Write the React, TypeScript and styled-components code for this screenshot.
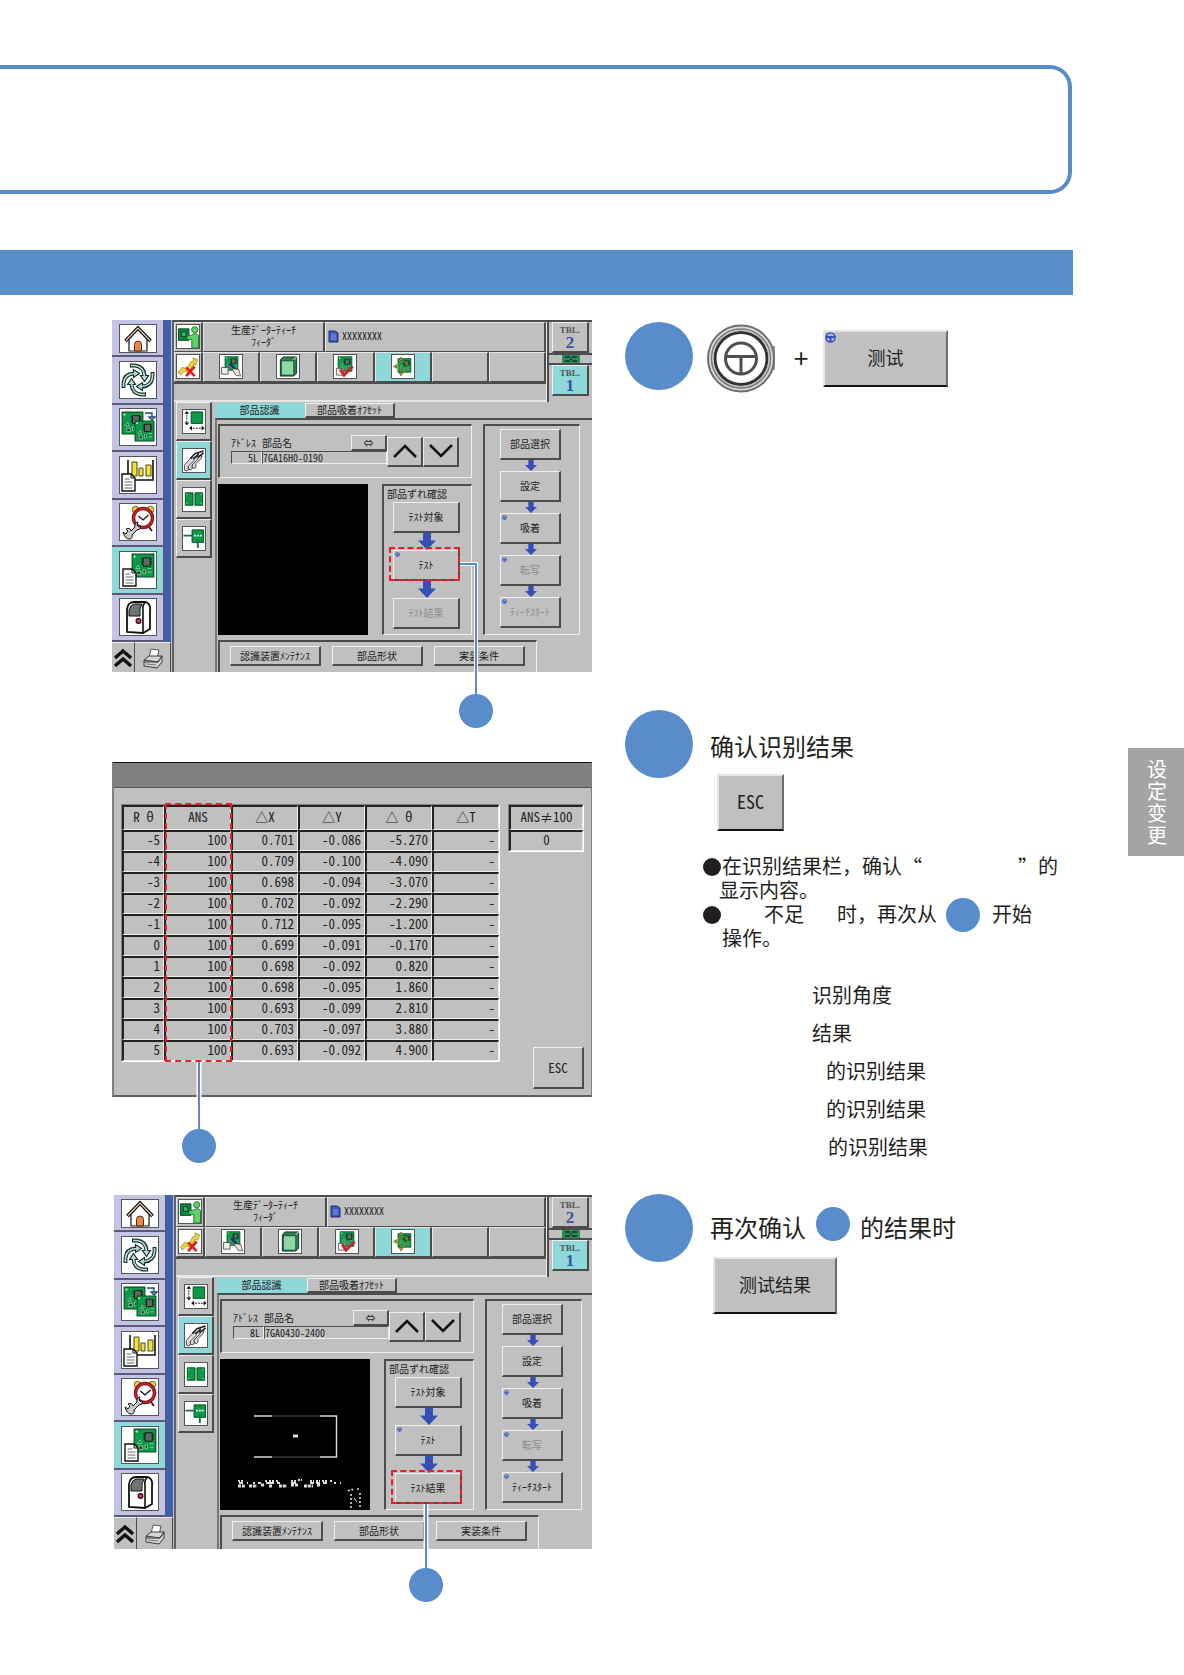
import React from "react";
import styled, { createGlobalStyle, css } from "styled-components";

const BLUE = "#588ccb";
const GREY = "#c0c0c0";
const CYAN = "#8fd8da";
const LILAC = "#c3c3e6";
const SHADOW = "#4c4c4c";
const ARROW = "#3450b4";
const GREEN = "#0c9a48";
const INK = "#231f20";

const Global = createGlobalStyle`
  *, *::before, *::after { box-sizing: border-box; }
  body { margin: 0; background: #fff; color: ${INK}; font-family: "Noto Sans CJK SC", sans-serif; }
  button, input { font: inherit; color: inherit; margin: 0; padding: 0; border-radius: 0; }
  h2, p, dl, dd, figure { margin: 0; font-weight: 400; }
  svg { display: block; }
`;

/* ---------- page ---------- */

const Page = styled.main`
  padding: 65px 0 88px;
`;
const Summary = styled.header`
  height: 129px;
  margin-right: 112px;
  border: 4px solid ${BLUE};
  border-left: 0;
  border-radius: 0 22px 22px 0;
`;
const Band = styled.div`
  height: 45px;
  margin: 56px 111px 25px 0;
  background: ${BLUE};
`;
const Step = styled.section`
  display: grid;
  grid-template-columns: 480px minmax(0, 1fr) 56px;
  padding-left: 112px;
`;
const Figure = styled.figure<{ $top?: number; $left?: number; $bottom?: number }>`
  position: relative;
  align-self: start;
  margin: ${(p) => `${p.$top ?? 0}px 0 ${p.$bottom ?? 0}px ${p.$left ?? 0}px`};
`;
const Text = styled.div<{ $top?: number }>`
  display: grid;
  grid-template-columns: 68px minmax(0, 1fr);
  align-content: start;
  padding: ${(p) => p.$top ?? 0}px 0 0 33px;
`;
const Dot = styled.span<{ $size: number }>`
  flex: none;
  width: ${(p) => p.$size}px;
  height: ${(p) => p.$size}px;
  border-radius: 50%;
  background: ${BLUE};
`;
const Body = styled.div<{ $top: number }>`
  padding: ${(p) => p.$top}px 0 0 17px;
`;
const Combo = styled.div`
  display: flex;
  align-items: center;
  height: 72px;
  padding-left: 14px;
`;
const Plus = styled.span`
  width: 48px;
  padding-left: 4px;
  font: 26px/26px "Liberation Sans", sans-serif;
  text-align: center;
`;
const Heading = styled.h2`
  display: flex;
  align-items: center;
  height: 34px;
  font-size: 24px;
  line-height: 34px;
`;
const HeadDot = styled(Dot)`
  margin: 0 10px 6px;
`;
const BigKey = styled.button<{ $w: number }>`
  position: relative;
  width: ${(p) => p.$w}px;
  height: 57px;
  padding-bottom: 3px;
  background: ${GREY};
  border: solid;
  border-width: 2px;
  border-color: #e6e6e6 #6e6e6e #111 #e6e6e6;
  color: #222;
  font: 18px/24px "Noto Sans Mono CJK SC", "Noto Sans CJK SC", sans-serif;
`;
const KeyMark = styled.span`
  position: absolute;
  left: 0;
  top: 0;
`;
const KeyRow = styled.div<{ $top: number; $left: number }>`
  padding: ${(p) => p.$top}px 0 0 ${(p) => p.$left}px;
`;
const Notes = styled.div`
  grid-column: 1 / -1;
  padding: 24px 0 0 78px;
  font: 20px/24px "Liberation Sans", "Noto Sans CJK SC", sans-serif;
`;
const Line = styled.p<{ $indent?: number }>`
  display: flex;
  align-items: center;
  height: 24px;
  padding-left: ${(p) => p.$indent ?? 0}px;
  white-space: pre;
`;
const Quote = styled.span`
  font-family: "Noto Sans CJK SC", sans-serif;
`;
const Bullet = styled.span`
  flex: none;
  width: 18px;
  height: 18px;
  margin-right: 1px;
  border-radius: 50%;
  background: ${INK};
`;
const Gap = styled.span<{ $w: number }>`
  flex: none;
  width: ${(p) => p.$w}px;
`;
const NoteDot = styled(Dot)`
  margin: 0 12px 0 9px;
`;
const Terms = styled.dl`
  grid-column: 1 / -1;
  display: grid;
  gap: 8px;
  padding: 29px 0 0 187px;
  font-size: 20px;
  line-height: 30px;
`;
const Term = styled.dd<{ $in?: number }>`
  padding-left: ${(p) => p.$in ?? 0}px;
`;
const SideTab = styled.aside`
  align-self: start;
  width: 56px;
  height: 108px;
  margin-top: 38px;
  padding: 10px 17px 0 19px;
  background: #a4a4a4;
  color: #fff;
  font-size: 20px;
  line-height: 22px;
  word-break: break-all;
`;

/* ---------- call-outs over the figures ---------- */

const Frame = styled.div<{ $x: number; $y: number; $w: number; $h: number }>`
  position: absolute;
  left: ${(p) => p.$x}px;
  top: ${(p) => p.$y}px;
  width: ${(p) => p.$w}px;
  height: ${(p) => p.$h}px;
  border: 2px dashed #ee1c25;
`;
const Leader = styled.svg<{ $x: number; $y: number }>`
  position: absolute;
  left: ${(p) => p.$x}px;
  top: ${(p) => p.$y}px;
`;

/* ---------- machine screen ---------- */

const jp = css`
  font: 10px/12px "Noto Sans CJK JP", sans-serif;
  color: #222;
`;
const sunken = css`
  border: solid;
  border-width: 2px 1px 1px 2px;
  border-color: ${SHADOW} #eee #eee ${SHADOW};
`;
const raised = css`
  background: ${GREY};
  border: solid;
  border-width: 1px 2px 2px 1px;
  border-color: #efefef ${SHADOW} ${SHADOW} #efefef;
`;
const Screen = styled.div<{ $h: number }>`
  ${jp}
  display: flex;
  height: ${(p) => p.$h}px;
  background: ${GREY};
  overflow: hidden;
  white-space: nowrap;
`;
const Nav = styled.nav`
  display: flex;
  flex-direction: column;
  width: 59px;
  flex: none;
`;
const NavTop = styled.div`
  display: flex;
  flex-direction: column;
  height: 322px;
  border-right: 6px solid #3c60b4;
`;
const NavItem = styled.button<{ $on?: boolean; $first?: boolean }>`
  flex: ${(p) => (p.$first ? "0 0 37px" : "1 1 0")};
  min-height: 0;
  display: flex;
  align-items: ${(p) => (p.$first ? "flex-start" : "center")};
  padding: ${(p) => (p.$first ? "4px 0 0 7px" : "0 0 0 7px")};
  background: ${(p) => (p.$on ? CYAN : LILAC)};
  border: solid;
  border-width: 0 2px 2px 0;
  border-color: #5a5a78;
`;
const NavIcon = styled.svg<{ $h?: number }>`
  width: 38px;
  height: ${(p) => p.$h ?? 38}px;
  background: #fff;
  border: 1px solid #555;
`;
const NavFoot = styled.div`
  flex: 1;
  display: flex;
`;
const FootKey = styled.button<{ $w: number }>`
  width: ${(p) => p.$w}px;
  display: flex;
  justify-content: center;
  align-items: center;
  background: ${GREY};
  border: solid;
  border-width: 1px 1px 0 0;
  border-color: #eee ${SHADOW} ${SHADOW} #eee;
`;
const Main = styled.div`
  flex: 1;
  min-width: 0;
  display: flex;
  flex-direction: column;
  margin-left: 1px;
  border-top: 2px solid ${SHADOW};
  border-left: 2px solid #606060;
`;
const Top = styled.div`
  display: flex;
  height: 80px;
`;
const TopLeft = styled.div`
  flex: 1;
  display: flex;
  flex-direction: column;
  border-right: 1px solid #eee;
`;
const TopRow = styled.div`
  display: flex;
  height: 30px;
`;
const Cell = styled.div<{ $w?: number; $on?: boolean }>`
  flex: ${(p) => (p.$w ? `0 0 ${p.$w}px` : "1 1 0")};
  display: flex;
  align-items: center;
  justify-content: center;
  padding-bottom: 2px;
  background: ${(p) => (p.$on ? CYAN : GREY)};
  border: solid;
  border-width: 1px 2px 1px 1px;
  border-color: #e6e6e6 ${SHADOW} ${SHADOW} #e6e6e6;
  text-align: center;
`;
const NameCell = styled(Cell)`
  justify-content: flex-start;
  gap: 3px;
  padding: 0 0 2px 2px;
`;
const Mono = styled.span`
  font-family: "Noto Sans Mono CJK JP", "Liberation Mono", monospace;
`;
const Status = styled.div`
  flex: 1;
  border-top: 2px solid ${SHADOW};
  border-bottom: 2px solid #e6e6e6;
`;
const Small = styled.svg`
  width: 24px;
  height: 25px;
  background: #fff;
  border: 1px solid #555;
`;
const Tables = styled.div`
  width: 45px;
  display: flex;
  flex-direction: column;
  align-items: center;
  border-left: 2px solid ${SHADOW};
`;
const TableKey = styled.button<{ $on?: boolean }>`
  ${raised}
  width: 37px;
  height: 31px;
  background: ${(p) => (p.$on ? CYAN : GREY)};
  color: #555;
  font: 700 9px/10px "Liberation Serif", serif;
`;
const TableNo = styled.span`
  display: block;
  color: #3a4fa8;
  font-size: 17px;
  line-height: 15px;
`;
const Link = styled.div`
  width: 100%;
  height: 12px;
  display: flex;
  align-items: center;
  justify-content: center;
  border: solid ${SHADOW};
  border-width: 2px 0;
`;
const Work = styled.div`
  flex: 1;
  min-height: 0;
  display: flex;
`;
const Sub = styled.div`
  width: 38px;
  padding: 0 0 0 2px;
`;
const SubKey = styled.button<{ $on?: boolean }>`
  ${raised}
  display: flex;
  align-items: center;
  justify-content: center;
  width: 36px;
  height: 39px;
  background: ${(p) => (p.$on ? CYAN : GREY)};
`;
const Panel = styled.div`
  flex: 1;
  min-width: 0;
  margin-left: 3px;
  display: flex;
  flex-direction: column;
`;
const Tabs = styled.div`
  display: flex;
  height: 20px;
  padding-top: 1px;
`;
const Tab = styled.button<{ $on?: boolean }>`
  ${raised}
  ${(p) => p.$on && css`background: ${CYAN}; border-color: ${CYAN};`}
  width: 90px;
`;
const Board = styled.div`
  flex: 1;
  border-top: 2px solid ${SHADOW};
  border-left: 2px solid #777;
  padding: 4px 0 0 1px;
`;
const Columns = styled.div`
  display: flex;
  gap: 11px;
`;
const Left = styled.div`
  width: 254px;
`;
const Address = styled.div`
  ${sunken}
  display: flex;
  align-items: center;
  height: 54px;
  padding-left: 11px;
`;
const Fields = styled.div`
  display: grid;
  grid-template-columns: 31px 89px 36px;
  grid-template-rows: 16px 13px;
  align-items: end;
  padding-bottom: 4px;
`;
const Label = styled.label`
  height: 14px;
`;
const Value = styled.input<{ $right?: boolean }>`
  ${sunken}
  border-width: 1px;
  width: 100%;
  height: 13px;
  background: transparent;
  font: 10px/11px "Noto Sans Mono CJK JP", "Liberation Mono", monospace;
  text-align: ${(p) => (p.$right ? "right" : "left")};
  padding-right: ${(p) => (p.$right ? 3 : 0)}px;
`;
const WideValue = styled(Value)`
  grid-column: 2 / 4;
`;
const Swap = styled.button`
  ${raised}
  height: 16px;
`;
const PageKey = styled.button`
  ${raised}
  width: 36px;
  height: 30px;
  display: flex;
  align-items: center;
  justify-content: center;
`;
const Lower = styled.div`
  display: flex;
  justify-content: space-between;
  margin-top: 6px;
`;
const Camera = styled.svg`
  width: 150px;
  height: 151px;
  background: #000;
`;
const Check = styled.div`
  ${sunken}
  width: 90px;
  height: 151px;
  display: flex;
  flex-direction: column;
  align-items: center;
  padding: 2px 2px 0 0;
`;
const CheckTitle = styled.div`
  align-self: start;
  padding-left: 3px;
  height: 14px;
`;
const Flow = styled.div`
  ${sunken}
  width: 97px;
  height: 211px;
  display: flex;
  flex-direction: column;
  align-items: center;
  padding: 3px 3px 0 0;
`;
const Key = styled.button<{ $w: number }>`
  ${raised}
  position: relative;
  width: ${(p) => p.$w}px;
  height: 31px;
  flex: none;
  &:disabled { color: #8e8e8e; }
`;
const Pip = styled.span`
  position: absolute;
  left: 1px;
  top: 1px;
`;
const Bottom = styled.div`
  ${sunken}
  border-bottom: 0;
  display: flex;
  gap: 11px;
  width: 319px;
  height: 40px;
  margin-top: 5px;
  padding: 4px 0 0 10px;
`;
const BottomKey = styled.button`
  ${raised}
  width: 91px;
  height: 20px;
`;

/* ---------- result dialog ---------- */

const Dialog = styled.div`
  height: 335px;
  background: ${GREY};
  border: solid;
  border-width: 1px 1px 2px 2px;
  border-color: #111 #808080 #606060 #808080;
  color: #222;
  font: 13px/16px "Noto Sans Mono CJK JP", "Liberation Mono", monospace;
`;
const TitleBar = styled.div`
  height: 25px;
  background: #808080;
  border-bottom: 1px solid #555;
`;
const DialogBody = styled.div`
  display: flex;
  align-items: flex-start;
  justify-content: space-between;
  padding: 16px 7px 0 7px;
`;
const Side = styled.div`
  display: flex;
  flex-direction: column;
  align-items: flex-end;
  justify-content: space-between;
  height: 285px;
`;
const Table = styled.table<{ $w: number }>`
  width: ${(p) => p.$w}px;
  table-layout: fixed;
  border-collapse: separate;
  border-spacing: 0;
  border: 1px solid;
  border-color: #808080 #fff #fff #808080;
`;
const cell = css`
  padding: 0 0 2px;
  border: solid;
  border-width: 2px 1px 1px 2px;
  border-color: #222 #eee #eee #222;
  font-weight: 400;
`;
const Th = styled.th`
  ${cell}
  height: 25px;
`;
const Td = styled.td<{ $center?: boolean }>`
  ${cell}
  height: 21px;
  padding-right: ${(p) => (p.$center ? 0 : 3)}px;
  text-align: ${(p) => (p.$center ? "center" : "right")};
`;
const Esc = styled.button`
  ${raised}
  width: 51px;
  height: 42px;
`;

/* ---------- drawings ---------- */

const Chip = ({ x, y, s = 20 }: { x: number; y: number; s?: number }) => (
  <g transform={`translate(${x} ${y}) scale(${s / 20})`}>
    <path d="M1 1h18v19H1z" fill={GREEN} stroke="#064d22" strokeWidth="1" />
    <path d="M10 4h6v7h-6z" fill="#5d6a63" stroke="#111" strokeWidth=".8" />
    <path d="M8.500 5h1.500M8.500 7h1.500M8.500 9h1.500M16 5h1.500M16 7h1.500M16 9h1.500" stroke="#111" strokeWidth=".8" />
    <path d="M4 13l2-3 1 3zM5 15h3v3H5zM10 14h2v3h-2zM14 13h3M14 16h3" fill="#1c3326" stroke="#9fd8b4" strokeWidth=".7" />
    <circle cx="3" cy="3" r=".9" fill="#d7f3df" />
  </g>
);
const Sheet = ({ x, y }: { x: number; y: number }) => (
  <g transform={`translate(${x} ${y})`}>
    <path d="M0 0h9l4 4v13H0z" fill="#fff" stroke="#111" strokeWidth="1.400" />
    <path d="M9 0v4h4" fill="none" stroke="#111" />
    <path d="M2.500 5h5M2.500 8h8M2.500 11h8M2.500 14h8" stroke="#666" strokeWidth="1" />
  </g>
);
const Wheel = ({ size }: { size: number }) => (
  <svg width={size} height={size} viewBox="0 0 10 10">
    <circle cx="5" cy="5" r="4.200" fill="#a9b6e6" stroke="#3450b4" strokeWidth="1.300" />
    <path d="M1 4.600h8M5 5v4" stroke="#3450b4" strokeWidth="1.800" />
  </svg>
);
const Down = ({ w, h }: { w: number; h: number }) => (
  <svg width={w} height={h} viewBox="0 0 18 18" preserveAspectRatio="none">
    <path d="M5 0h8v8h5l-9 10L0 8h5z" fill={ARROW} />
  </svg>
);
const vb = "0 0 36 36";
const HomeIcon = () => (
  <NavIcon $h={29} viewBox="0 0 36 27">
    <path d="M9 14v12h18V14l-9-10z" fill="#fff" stroke="#111" strokeWidth="1.200" />
    <path d="M5.500 16L18 3l12.500 13" fill="none" stroke="#111" strokeWidth="3.600" />
    <path d="M6 15.500L18 3.200l12 12.300" fill="none" stroke="#f3d0b0" strokeWidth="1.200" />
    <path d="M14.500 26v-6.500a3.500 3.500 0 017 0V26z" fill="#e58a4a" stroke="#5a2a12" />
  </NavIcon>
);
const CycleIcon = () => (
  <NavIcon viewBox={vb}>
    {[0, 90, 180, 270].map((a) => (
      <g key={a} transform={`rotate(${a} 18 18)`}>
        <path d="M10 3.500h5q9 1 9.500 10" fill="none" stroke="#12302c" strokeWidth="3.800" />
        <path d="M20.500 13.500h8l-4 6z" fill="#b9dcd6" stroke="#12302c" strokeWidth="1.200" />
        <path d="M11 3.500h4q9 1 9.500 11" fill="none" stroke="#b9dcd6" strokeWidth="1.600" />
      </g>
    ))}
  </NavIcon>
);
const BoardsIcon = () => (
  <NavIcon viewBox={vb}>
    <Chip x={1} y={2} s={23} />
    <path d="M25 4h7v4M32 11l-3-3h6z" fill="#cfe6f4" stroke="#1c4d6b" strokeWidth="1.300" />
    <Chip x={14} y={11} s={21} />
  </NavIcon>
);
const ChartIcon = () => (
  <NavIcon viewBox={vb}>
    <path d="M8 3v20h25V3" fill="#fff" stroke="#111" strokeWidth="1.600" />
    <path d="M12 5h5v14h-5zM19 11h4v8h-4zM26 8h5v11h-5z" fill="#f2e33c" stroke="#4b4410" />
    <Sheet x={2} y={17} />
  </NavIcon>
);
const ClockIcon = () => (
  <NavIcon viewBox={vb}>
    <circle cx="15.500" cy="5.500" r="3.200" fill="#f2dc3c" stroke="#6b5a10" />
    <circle cx="30.500" cy="5.500" r="3.200" fill="#f2dc3c" stroke="#6b5a10" />
    <path d="M17 23l-3 4M29 23l3 4" stroke="#5b1010" strokeWidth="2" />
    <circle cx="23" cy="14" r="9.500" fill="#fff" stroke="#7a1216" strokeWidth="3.400" />
    <circle cx="23" cy="14" r="9.500" fill="none" stroke="#c9272d" strokeWidth="1.400" />
    <path d="M18.500 12l4.500 4 5.500-5" fill="none" stroke="#111" strokeWidth="1.300" />
    <path d="M3 28l3 2 2-3-2-2q4-2 5 2l4-4q-1-4 3-5l-1 3 2 2 2-1q0 4-4 4l-5 5q1 4-3 4-4 0-6-7z" fill="#c9c9c9" stroke="#111" />
  </NavIcon>
);
const TeachIcon = () => (
  <NavIcon viewBox={vb}>
    <Chip x={11} y={1} s={24} />
    <Sheet x={3} y={17} />
  </NavIcon>
);
const MachineIcon = () => (
  <NavIcon viewBox={vb}>
    <path d="M7 33V10q1-7 7-7h12q5 2 4 9v18l-7 4z" fill="#fff" stroke="#111" strokeWidth="1.800" />
    <path d="M23 34V12q-1-7 3-9" fill="none" stroke="#111" strokeWidth="1.600" />
    <path d="M9 17v-6q1-5 5-6h8q-3 4-2 12z" fill="#6e7676" stroke="#111" />
    <circle cx="18.500" cy="22" r="2.400" fill="#d23a5c" stroke="#3a0812" strokeWidth="1.200" />
  </NavIcon>
);
const PrinterIcon = () => (
  <svg width="22" height="24" viewBox="0 0 22 24">
    <path d="M7 12l2-9 8 1-2 9z" fill="#fff" stroke="#555" />
    <path d="M2 14l5-4h13l-4 6zM2 14v6l13 2 5-6v-6l-4 6H2" fill="#d4d4d4" stroke="#3c3c3c" />
    <path d="M4 18l10 1" stroke="#777" />
  </svg>
);
const Chevrons = () => (
  <svg width="18" height="22" viewBox="0 0 18 22">
    <path d="M1 11l8-7 8 7M1 19l8-7 8 7" fill="none" stroke="#111" strokeWidth="3.400" />
  </svg>
);
const sb = "0 0 22 24";
const OperatorIcon = () => (
  <Small viewBox={sb}>
    <path d="M1 4h11v12H1z" fill="#0c8a42" stroke="#043d1b" />
    <path d="M4 7h5v5H4z" fill="#3fa96b" stroke="#043d1b" />
    <circle cx="18" cy="5" r="3.200" fill="#5fd06a" stroke="#1c7a2c" />
    <path d="M10 11h4q5-4 8 0v13h-7v-9h-5z" fill="#5fd06a" stroke="#1c7a2c" />
  </Small>
);
const NoPathIcon = () => (
  <Small viewBox={sb}>
    <path d="M1 18l4-5 5 1 4-7 3-1-1-3 5 2-2 6-2-2-5 9-5-1-4 4z" fill="#e8d83c" stroke="#8a7d14" strokeWidth=".7" />
    <path d="M9 13l9 9M18 12l-9 10" stroke="#e0201c" strokeWidth="2.800" />
  </Small>
);
const EditIcon = () => (
  <Small viewBox={sb}>
    <Chip x={4} y={1} s={15} />
    <path d="M1 13h7v7H1z" fill="#eee" stroke="#555" />
    <path d="M9 9l9 8" stroke="#20306e" strokeWidth="2.600" />
    <path d="M12 14l7 1 2 7-5-1z" fill="#f4e3d3" stroke="#444" strokeWidth=".8" />
  </Small>
);
const BookIcon = () => (
  <Small viewBox={sb}>
    <path d="M3 5l3-3h14v17l-3 3H3z" fill="#2f7d52" stroke="#0d3a20" />
    <path d="M4 6h13v15H4z" fill="#8fd6a8" stroke="#0d3a20" strokeWidth=".8" />
    <path d="M17 5l3-3" stroke="#fff" />
  </Small>
);
const VerifyIcon = () => (
  <Small viewBox={sb}>
    <Chip x={3} y={1} s={16} />
    <path d="M2 14h7v7H2z" fill="#eee" stroke="#666" />
    <path d="M6 15l4 6 9-9" fill="none" stroke="#d2202a" strokeWidth="3" />
  </Small>
);
const TargetIcon = () => (
  <Small viewBox={sb}>
    <Chip x={5} y={3} s={15} />
    <circle cx="11" cy="12" r="5" fill="none" stroke="#6f8a1c" strokeWidth="1.300" />
    <path d="M9 2l2 3.500H7zM9 22l2-3.500H7zM1 12l3.500-2v4z" fill="#a39a33" stroke="#5a5210" strokeWidth=".6" />
  </Small>
);
const DimIcon = () => (
  <Small viewBox={sb}>
    <path d="M8 2h12v12H8z" fill={GREEN} stroke="#064d22" />
    <path d="M3.500 2v13M7 19h14" stroke="#111" strokeDasharray="2 1" />
    <path d="M1 4h5L3.500 1zM1 13h5l-2.500 3zM9 16.500v5L6 19zM19 16.500v5l3-2.500z" fill="#111" />
  </Small>
);
const FeederIcon = () => (
  <Small viewBox={sb}>
    {[8, 4, 0].map((d) => (
      <path key={d} d={`M${1 + d} ${22 - d / 3}v-5l6-7 4-1v3l-6 6v4q-2 2-4 0z`} fill="#dcdcdc" stroke="#333" strokeWidth=".9" />
    ))}
    <path d="M7 10l5-5 9-3M11 10l5-5M15 9l6-5" stroke="#222" strokeWidth="1.600" fill="none" />
  </Small>
);
const PairIcon = () => (
  <Small viewBox={sb}>
    <path d="M2 5h8v13H2zM12 5h8v13h-8z" fill={GREEN} stroke="#064d22" />
    <path d="M3 7h1M3 16h1M18 7h1M18 16h1" stroke="#cfe" />
  </Small>
);
const ProbeIcon = () => (
  <Small viewBox={sb}>
    <path d="M9 3h12v13H9z" fill={GREEN} stroke="#064d22" />
    <path d="M0 9h9M15 22v-9" stroke="#1d6b57" strokeWidth="2" />
    <path d="M11 8h2v2h-2zM14 8h2v2h-2zM17 8h2v2h-2z" fill="#dff5e6" />
  </Small>
);
const DocIcon = () => (
  <svg width="11" height="13" viewBox="0 0 11 13">
    <path d="M1 1h6l3 2v9H1z" fill="#3a5cc0" stroke="#1b2a70" />
    <path d="M3 5h5M3 7h5M3 9h5" stroke="#7f98e0" />
  </svg>
);
const LinkIcon = () => (
  <svg width="18" height="8" viewBox="0 0 18 8">
    <path d="M0 0h18v8H0z" fill="#2b8a5a" />
    <path d="M3 2h5M3 6h5M10 2h5M10 6h5M8 4h2" stroke="#0b3a22" strokeWidth="1.300" />
  </svg>
);
const Joystick = () => (
  <svg width="68" height="69" viewBox="0 0 68 69">
    <path d="M65 22h3v24h-3z" fill="#9a9a9a" />
    <circle cx="34" cy="34.500" r="33" fill="#d9d9d9" stroke="#6e6e6e" strokeWidth="2" />
    <circle cx="34" cy="34.500" r="29.500" fill="#e8e8e8" stroke="#777" strokeWidth="1.500" />
    <circle cx="34" cy="34.500" r="26" fill="#fff" stroke="#333" strokeWidth="3" />
    <circle cx="34" cy="34.500" r="28" fill="none" stroke="#bdbdbd" strokeWidth="1" />
    <circle cx="34" cy="34.500" r="15.500" fill="none" stroke="#4e4e4e" strokeWidth="3" />
    <path d="M19 32.500h30M34 33v17" stroke="#4e4e4e" strokeWidth="3" />
  </svg>
);
const Caret = ({ flip }: { flip?: boolean }) => (
  <svg width="24" height="16" viewBox="0 0 24 16">
    <path d={flip ? "M1 2l11 11L23 2" : "M1 14L12 3l11 11"} fill="none" stroke="#111" strokeWidth="2.600" />
  </svg>
);
const CameraView = ({ scan }: { scan?: boolean }) => (
  <Camera viewBox="0 0 150 151" role="img" aria-label="カメラ画像">
    {scan && (
      <g fill="none" stroke="#ddd">
        <path d="M34 57h18M100 57h16.500v41H100M34 98h18" strokeWidth="1.400" />
        <path d="M52 57h48M52 98h48" stroke="#555" />
        <path d="M73 77h5" strokeWidth="3" />
        <path d="M18 122h5M45 122h3M49 122h5M56 122h3M71 122h5M78 121h4M90 122h4M96 122h4M102 122h5M110 122h3M114 124h2M120 124h1" strokeWidth="2" strokeDasharray="2 1" />
        <path d="M19 124h4M27 124h1M33 124h2M38 124h3M46 124h8M57 124h3M71 124h5M90 124h4M96 124h4M103 124h4" strokeWidth="2" />
        <path d="M18 127h7M29 127h8M41 126h3M49 127h3M59 127h8M71 126h3M75 126h3M84 127h9M97 126h3" strokeWidth="3" strokeDasharray="3 .8" />
        <path d="M128 132l3-2 4 2M137 130h2M131 135v14M140 134v14" strokeWidth="1.600" strokeDasharray="2 2" />
        <path d="M134 139l3 4" />
      </g>
    )}
  </Camera>
);

/* ---------- composed parts ---------- */

interface Item {
  label: string;
  pip?: boolean;
  off?: boolean;
}
const Chain = ({ items, w, aw, gap }: { items: Item[]; w: number; aw: number; gap: number }) => (
  <>
    {items.map((it, i) => (
      <React.Fragment key={it.label}>
        {i > 0 && <Down w={aw} h={gap} />}
        <Key $w={w} disabled={it.off}>
          {it.pip && (
            <Pip>
              <Wheel size={5} />
            </Pip>
          )}
          {it.label}
        </Key>
      </React.Fragment>
    ))}
  </>
);

interface MachineProps {
  id: string;
  height: number;
  address: string;
  part: string;
  tested?: boolean;
}
const Machine = ({ id, height, address, part, tested }: MachineProps) => (
  <Screen $h={height}>
    <Nav aria-label="メニュー">
      <NavTop>
        <NavItem $first aria-label="ホーム"><HomeIcon /></NavItem>
        <NavItem aria-label="自動運転"><CycleIcon /></NavItem>
        <NavItem aria-label="機種切替"><BoardsIcon /></NavItem>
        <NavItem aria-label="生産情報"><ChartIcon /></NavItem>
        <NavItem aria-label="メンテナンス"><ClockIcon /></NavItem>
        <NavItem $on aria-label="データ編集"><TeachIcon /></NavItem>
        <NavItem aria-label="マシン"><MachineIcon /></NavItem>
      </NavTop>
      <NavFoot>
        <FootKey $w={23} aria-label="上へ"><Chevrons /></FootKey>
        <FootKey $w={36} aria-label="印刷"><PrinterIcon /></FootKey>
      </NavFoot>
    </Nav>
    <Main>
      <Top>
        <TopLeft>
          <TopRow>
            <Cell $w={29}><OperatorIcon /></Cell>
            <Cell $w={122}>生産ﾃﾞｰﾀｰﾃｨｰﾁ<br />ﾌｨｰﾀﾞ</Cell>
            <NameCell><DocIcon /><Mono>XXXXXXXX</Mono></NameCell>
          </TopRow>
          <TopRow>
            <Cell $w={29}><NoPathIcon /></Cell>
            <Cell><EditIcon /></Cell>
            <Cell><BookIcon /></Cell>
            <Cell><VerifyIcon /></Cell>
            <Cell $on><TargetIcon /></Cell>
            <Cell />
            <Cell />
          </TopRow>
          <Status />
        </TopLeft>
        <Tables>
          <TableKey>TBL.<TableNo>2</TableNo></TableKey>
          <Link><LinkIcon /></Link>
          <TableKey $on>TBL.<TableNo>1</TableNo></TableKey>
        </Tables>
      </Top>
      <Work>
        <Sub>
          <SubKey aria-label="部品寸法"><DimIcon /></SubKey>
          <SubKey $on aria-label="フィーダ"><FeederIcon /></SubKey>
          <SubKey aria-label="基板"><PairIcon /></SubKey>
          <SubKey aria-label="計測"><ProbeIcon /></SubKey>
        </Sub>
        <Panel>
          <Tabs>
            <Tab $on>部品認識</Tab>
            <Tab>部品吸着ｵﾌｾｯﾄ</Tab>
          </Tabs>
          <Board>
            <Columns>
              <Left>
                <Address>
                  <Fields>
                    <Label htmlFor={`${id}-address`}>ｱﾄﾞﾚｽ</Label>
                    <Label htmlFor={`${id}-part`}>部品名</Label>
                    <Swap aria-label="切替">⇔</Swap>
                    <Value $right id={`${id}-address`} readOnly value={address} />
                    <WideValue id={`${id}-part`} readOnly value={part} />
                  </Fields>
                  <PageKey aria-label="前へ"><Caret /></PageKey>
                  <PageKey aria-label="次へ"><Caret flip /></PageKey>
                </Address>
                <Lower>
                  <CameraView scan={tested} />
                  <Check>
                    <CheckTitle>部品ずれ確認</CheckTitle>
                    <Chain
                      w={67}
                      aw={18}
                      gap={17}
                      items={[
                        { label: "ﾃｽﾄ対象" },
                        { label: "ﾃｽﾄ", pip: true },
                        { label: "ﾃｽﾄ結果", off: !tested },
                      ]}
                    />
                  </Check>
                </Lower>
              </Left>
              <Flow>
                <Chain
                  w={61}
                  aw={12}
                  gap={11}
                  items={[
                    { label: "部品選択" },
                    { label: "設定" },
                    { label: "吸着", pip: true },
                    { label: "転写", pip: true, off: true },
                    { label: "ﾃｨｰﾁｽﾀｰﾄ", pip: true, off: !tested },
                  ]}
                />
              </Flow>
            </Columns>
            <Bottom>
              <BottomKey>認識装置ﾒﾝﾃﾅﾝｽ</BottomKey>
              <BottomKey>部品形状</BottomKey>
              <BottomKey>実装条件</BottomKey>
            </Bottom>
          </Board>
        </Panel>
      </Work>
    </Main>
  </Screen>
);

const heads = ["R θ", "ANS", "△X", "△Y", "△ θ", "△T"];
const widths = [42, 67, 67, 67, 67, 67];
const rows = [
  ["-5", "100", "0.701", "-0.086", "-5.270", "-"],
  ["-4", "100", "0.709", "-0.100", "-4.090", "-"],
  ["-3", "100", "0.698", "-0.094", "-3.070", "-"],
  ["-2", "100", "0.702", "-0.092", "-2.290", "-"],
  ["-1", "100", "0.712", "-0.095", "-1.200", "-"],
  ["0", "100", "0.699", "-0.091", "-0.170", "-"],
  ["1", "100", "0.698", "-0.092", "0.820", "-"],
  ["2", "100", "0.698", "-0.095", "1.860", "-"],
  ["3", "100", "0.693", "-0.099", "2.810", "-"],
  ["4", "100", "0.703", "-0.097", "3.880", "-"],
  ["5", "100", "0.693", "-0.092", "4.900", "-"],
];

const Results = () => (
  <Dialog>
    <TitleBar />
    <DialogBody>
      <Table $w={379}>
        <colgroup>
          {widths.map((w, i) => (
            <col key={i} width={w} />
          ))}
        </colgroup>
        <thead>
          <tr>{heads.map((h) => <Th key={h}>{h}</Th>)}</tr>
        </thead>
        <tbody>
          {rows.map((r) => (
            <tr key={r[0]}>{r.map((c, i) => <Td key={i}>{c}</Td>)}</tr>
          ))}
        </tbody>
      </Table>
      <Side>
        <Table $w={76}>
          <thead>
            <tr><Th>ANS≠100</Th></tr>
          </thead>
          <tbody>
            <tr><Td $center>0</Td></tr>
          </tbody>
        </Table>
        <Esc>ESC</Esc>
      </Side>
    </DialogBody>
  </Dialog>
);

export default function App() {
  return (
    <>
      <Global />
      <Page lang="zh-CN">
        <Summary />
        <Band />

        <Step>
          <Figure $bottom={38} lang="ja">
            <Machine id="a" height={352} address="5L" part="7GA16H0-0190" />
            <Frame $x={277} $y={227} $w={71} $h={34} />
            <Leader $x={346} $y={240} width="38" height="168">
              <path d="M2 4h16v134" fill="none" stroke="#fff" strokeWidth="4" />
              <path d="M2 4h16v134" fill="none" stroke={BLUE} strokeWidth="2" />
              <circle cx="18" cy="151" r="17" fill={BLUE} />
            </Leader>
          </Figure>
          <Text $top={2}>
            <Dot $size={68} />
            <Combo>
              <Joystick />
              <Plus>+</Plus>
              <BigKey $w={125}>
                <KeyMark>
                  <Wheel size={11} />
                </KeyMark>
                测试
              </BigKey>
            </Combo>
          </Text>
        </Step>

        <Step>
          <Figure $top={52} $bottom={97} lang="ja">
            <Results />
            <Frame $x={53} $y={41} $w={67} $h={259} />
            <Leader $x={70} $y={300} width="34" height="101">
              <path d="M17 0v70" stroke="#fff" strokeWidth="5" />
              <path d="M17 0v70" stroke={BLUE} strokeWidth="2" />
              <circle cx="17" cy="84" r="17" fill={BLUE} />
            </Leader>
          </Figure>
          <Text>
            <Dot $size={68} />
            <Body $top={19}>
              <Heading>确认识别结果</Heading>
              <KeyRow $top={11} $left={7}><BigKey $w={67}>ESC</BigKey></KeyRow>
            </Body>
            <Notes>
              <Line><Bullet />在识别结果栏，确认<Quote>“</Quote><Gap $w={96} /><Quote>”</Quote>的</Line>
              <Line $indent={16}>显示内容。</Line>
              <Line><Bullet /><Gap $w={42} />不足<Gap $w={33} />时，再次从<NoteDot $size={34} />开始</Line>
              <Line $indent={19}>操作。</Line>
            </Notes>
            <Terms>
              <Term>识别角度</Term>
              <Term>结果</Term>
              <Term $in={14}>的识别结果</Term>
              <Term $in={14}>的识别结果</Term>
              <Term $in={16}>的识别结果</Term>
            </Terms>
          </Text>
          <SideTab>设定变更</SideTab>
        </Step>

        <Step>
          <Figure $top={1} $left={2} lang="ja">
            <Machine id="b" height={354} address="8L" part="7GA0430-2400" tested />
            <Frame $x={277} $y={275} $w={71} $h={34} />
            <Leader $x={295} $y={309} width="34" height="99">
              <path d="M17 0v66" stroke="#fff" strokeWidth="5" />
              <path d="M17 0v66" stroke={BLUE} strokeWidth="2" />
              <circle cx="17" cy="81" r="17" fill={BLUE} />
            </Leader>
          </Figure>
          <Text>
            <Dot $size={68} />
            <Body $top={16}>
              <Heading>再次确认<HeadDot $size={34} />的结果时</Heading>
              <KeyRow $top={13} $left={3}><BigKey $w={124}>测试结果</BigKey></KeyRow>
            </Body>
          </Text>
        </Step>
      </Page>
    </>
  );
}
